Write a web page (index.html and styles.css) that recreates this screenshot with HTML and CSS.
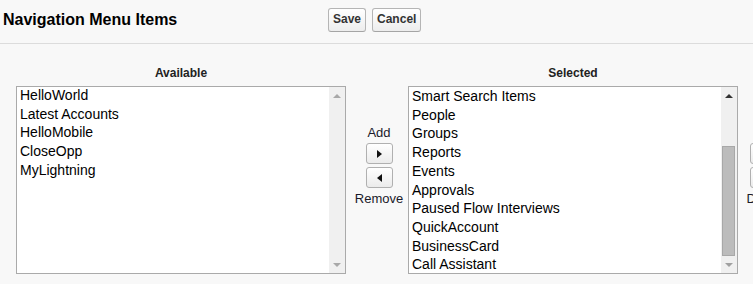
FILE: index.html
```html
<!DOCTYPE html>
<html lang="en">
<head>
    <meta charset="UTF-8">
    <title>Navigation Menu Items</title>
    <link rel="stylesheet" href="styles.css">
</head>
<body>
    <header class="page-header">
        <h1 class="page-title">Navigation Menu Items</h1>
        <button class="btn">Save</button>
        <button class="btn">Cancel</button>
    </header>

    <div class="picker">
        <!-- Available list -->
        <div class="picker-col">
            <div class="col-label">Available</div>
            <div class="listbox">
                <ul class="list-items list-items--first">
                    <li>HelloWorld</li>
                    <li>Latest Accounts</li>
                    <li>HelloMobile</li>
                    <li>CloseOpp</li>
                    <li>MyLightning</li>
                </ul>
                <div class="scrollbar scrollbar--off">
                    <span class="sb-arrow"><span class="tri-up"></span></span>
                    <div class="sb-track"></div>
                    <span class="sb-arrow"><span class="tri-down"></span></span>
                </div>
            </div>
        </div>

        <!-- Add / Remove -->
        <div class="move-col">
            <div class="move-label">Add</div>
            <button class="arrow-btn"><span class="tri-right"></span></button>
            <button class="arrow-btn"><span class="tri-left"></span></button>
            <div class="move-label move-label--below">Remove</div>
        </div>

        <!-- Selected list -->
        <div class="picker-col">
            <div class="col-label">Selected</div>
            <div class="listbox">
                <ul class="list-items">
                    <li>Smart Search Items</li>
                    <li>People</li>
                    <li>Groups</li>
                    <li>Reports</li>
                    <li>Events</li>
                    <li>Approvals</li>
                    <li>Paused Flow Interviews</li>
                    <li>QuickAccount</li>
                    <li>BusinessCard</li>
                    <li>Call Assistant</li>
                </ul>
                <div class="scrollbar">
                    <span class="sb-arrow"><span class="tri-up"></span></span>
                    <div class="sb-track"><div class="sb-thumb"></div></div>
                    <span class="sb-arrow"><span class="tri-down"></span></span>
                </div>
            </div>
        </div>

        <!-- Up / Down -->
        <div class="move-col move-col--order">
            <div class="move-label move-label--blank"></div>
            <button class="arrow-btn"><span class="tri-up tri-up--btn"></span></button>
            <button class="arrow-btn"><span class="tri-down tri-down--btn"></span></button>
            <div class="move-label move-label--below">Down</div>
        </div>
    </div>
</body>
</html>
```

FILE: styles.css
```css
* {
    box-sizing: border-box;
    margin: 0;
    padding: 0;
}

body {
    font-family: "Liberation Sans", Arial, sans-serif;
    background-color: #f8f8f8;
    color: #000;
    overflow: hidden;
}

/* Header */
.page-header {
    display: flex;
    align-items: flex-start;
    height: 44px;
    padding: 8px 0 0 3px;
    border-bottom: 1px solid #dcdcdc;
}

.page-title {
    flex: 0 0 325px;
    margin-top: 3px;
    font-size: 16px;
    line-height: 18px;
    font-weight: bold;
    color: #000;
}

.btn {
    height: 24px;
    margin-right: 6px;
    padding: 3px 4px 5px;
    font-family: inherit;
    font-size: 12px;
    line-height: 14px;
    font-weight: bold;
    color: #333;
    background: linear-gradient(#ffffff, #ededed);
    border: 1px solid #b5b5b5;
    border-bottom-color: #a5a5a5;
    border-radius: 3px;
}

/* Dueling lists */
.picker {
    display: flex;
    width: max-content;
    padding: 22px 0 0 16px;
}

.picker-col {
    flex: 0 0 330px;
}

.col-label {
    height: 14px;
    margin-bottom: 6px;
    text-align: center;
    font-size: 12px;
    line-height: 14px;
    font-weight: bold;
    color: #222;
}

.listbox {
    display: flex;
    height: 188px;
    background-color: #fff;
    border: 1px solid #aaa;
    overflow: hidden;
}

.list-items {
    flex: 1;
    list-style: none;
    padding-left: 3px;
    overflow: hidden;
}

.list-items--first {
    margin-top: -1px;
}

.list-items li {
    font-size: 14px;
    line-height: 18.7px;
    white-space: nowrap;
}

/* Fake scrollbar */
.scrollbar {
    flex: 0 0 16px;
    display: flex;
    flex-direction: column;
    background-color: #f0f0f0;
}

.sb-arrow {
    display: flex;
    justify-content: center;
    align-items: center;
    height: 17px;
}

.sb-track {
    flex: 1;
    display: flex;
    flex-direction: column;
    justify-content: flex-end;
    padding: 0 2px 0 1px;
}

.sb-thumb {
    height: 110px;
    background-color: #bcbcbc;
    border: 1px solid #a8a8a8;
}

.tri-up {
    width: 0;
    height: 0;
    border-left: 4px solid transparent;
    border-right: 4px solid transparent;
    border-bottom: 4px solid #333;
}

.tri-down {
    width: 0;
    height: 0;
    border-left: 4px solid transparent;
    border-right: 4px solid transparent;
    border-top: 4px solid #a0a0a0;
}

.scrollbar--off .tri-up {
    border-bottom-color: #a8a8a8;
}

.scrollbar--off .tri-down {
    border-top-color: #a8a8a8;
}

/* Move buttons between the lists */
.move-col {
    flex: 0 0 62px;
    display: flex;
    flex-direction: column;
    align-items: center;
    padding: 59px 0 0 4px;
}

.move-col--order {
    flex-basis: 50px;
    padding-left: 0;
}

.move-label {
    height: 15px;
    font-size: 13px;
    line-height: 15px;
    color: #1a1a2a;
    margin-bottom: 3px;
}

.move-label--below {
    margin: 3px 0 0;
}

.arrow-btn {
    display: flex;
    justify-content: center;
    align-items: center;
    width: 27px;
    height: 21px;
    margin-bottom: 3px;
    background: linear-gradient(#ffffff, #ebebeb);
    border: 1px solid #b0b0b0;
    border-radius: 3px;
}

.arrow-btn:last-of-type {
    margin-bottom: 0;
}

.tri-right {
    width: 0;
    height: 0;
    border-top: 4px solid transparent;
    border-bottom: 4px solid transparent;
    border-left: 5px solid #111;
}

.tri-left {
    width: 0;
    height: 0;
    border-top: 4px solid transparent;
    border-bottom: 4px solid transparent;
    border-right: 5px solid #111;
}

.tri-up--btn {
    border-bottom: 5px solid #111;
}

.tri-down--btn {
    border-top: 5px solid #111;
}
```
